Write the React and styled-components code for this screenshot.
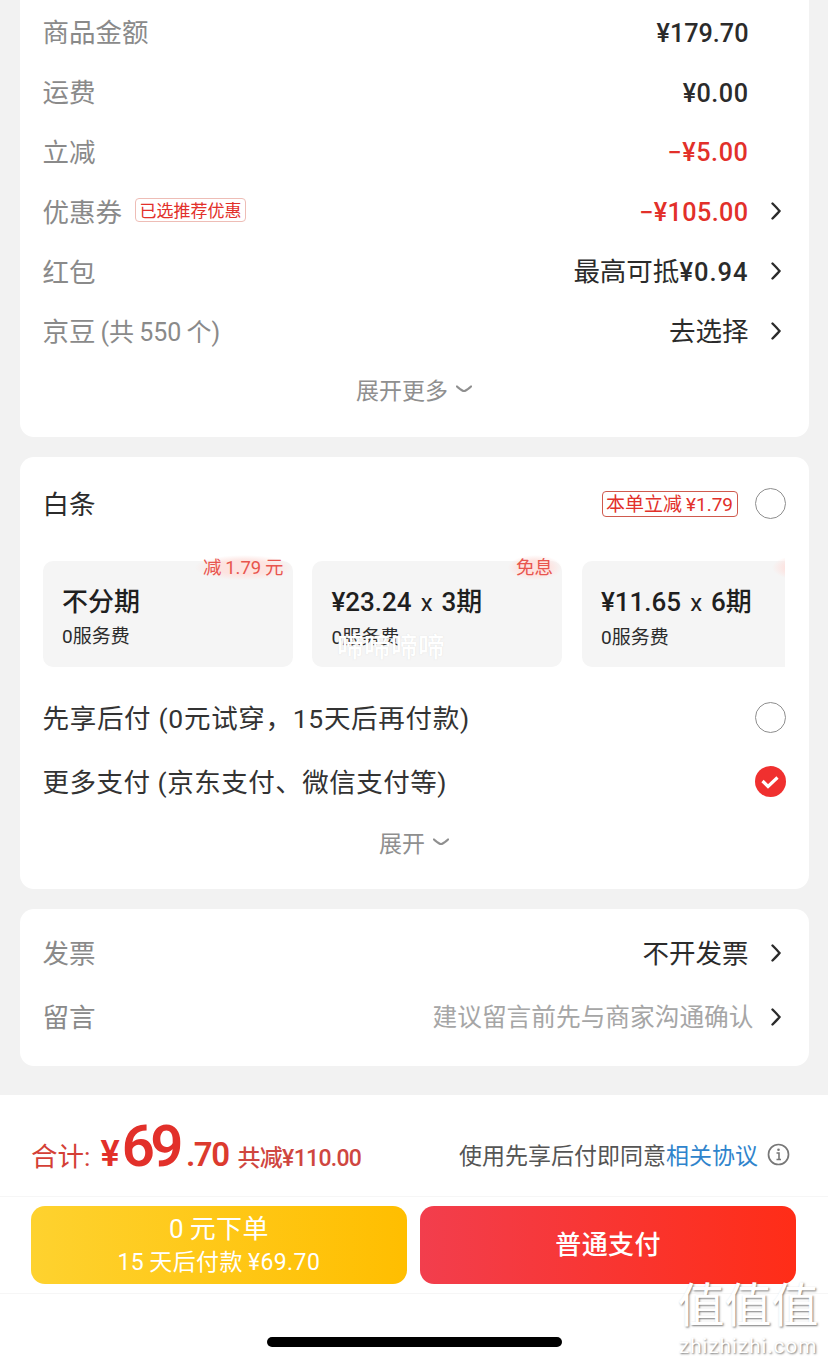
import styled, { createGlobalStyle } from 'styled-components';

const GlobalStyle = createGlobalStyle`
  html, body {
    margin: 0;
    padding: 0;
    background: #f2f2f2;
  }
  * {
    box-sizing: border-box;
  }
`;

const FONT = `Roboto, "Noto Sans CJK SC", sans-serif`;

const Page = styled.div`
  position: relative;
  width: 828px;
  height: 1362px;
  overflow: hidden;
  background: #f2f2f2;
  font-family: ${FONT};
`;

const Card = styled.section`
  margin: 0 19.5px 20px;
  padding: ${(p) => p.$padding || '0 23px'};
  background: #fff;
  border-radius: ${(p) => (p.$first ? '0 0 14px 14px' : '14px')};
`;

const Row = styled.div`
  display: flex;
  align-items: center;
  justify-content: space-between;
  height: ${(p) => p.$height || 59.8}px;
`;

const Label = styled.div`
  display: flex;
  align-items: center;
  padding-bottom: 2px;
  font-size: 26.5px;
  letter-spacing: ${(p) => p.$spacing || 0}px;
  white-space: pre;
  color: ${(p) => p.$color || '#8a8a8a'};
`;

const LabelNote = styled.span`
  margin-left: 5px;
  font-size: 25px;
`;

const RowRight = styled.div`
  display: flex;
  align-items: center;
  padding-right: ${(p) => (p.$noArrow ? '37px' : '0')};
`;

const Amount = styled.span`
  padding-top: 3px;
  font-size: 25.2px;
  font-weight: 500;
  letter-spacing: ${(p) => p.$spacing || 0}px;
  color: ${(p) => (p.$red ? '#e2302a' : '#2b2b2b')};
`;

const Value = styled.span`
  padding-bottom: 3px;
  font-size: 26.5px;
  color: #2b2b2b;
`;

const ValueDigits = styled.span`
  font-size: 25.5px;
  font-weight: 500;
  letter-spacing: 1px;
`;

const Hint = styled.span`
  margin-right: -5px;
  padding-bottom: 3px;
  font-size: 24.7px;
  color: #a6a6a6;
`;

const ArrowBox = styled.span`
  display: flex;
  justify-content: flex-end;
  width: 37px;
  padding-right: 5px;
`;

const Tag = styled.span`
  display: inline-flex;
  align-items: center;
  height: ${(p) => p.$height || 24}px;
  margin-left: ${(p) => p.$left || 0}px;
  padding: 0 3.5px 2px;
  border: 1px solid ${(p) => p.$border || '#eebdb6'};
  border-radius: 4px;
  font-size: ${(p) => p.$size || 17}px;
  letter-spacing: 0;
  color: #e2302a;
  white-space: nowrap;
`;

const Expand = styled.div`
  display: flex;
  align-items: center;
  justify-content: center;
  gap: 8px;
  height: 60px;
  padding-bottom: 3px;
  font-size: 23px;
  color: #8f8f8f;
`;

const Radio = styled.span`
  display: flex;
  align-items: center;
  justify-content: center;
  width: 31px;
  height: 31px;
  border-radius: 50%;
  border: ${(p) => (p.$checked ? 'none' : '1px solid #8e8e8e')};
  background: ${(p) => (p.$checked ? '#f0302f' : '#fff')};
  flex-shrink: 0;
`;

const HeadRight = styled.div`
  display: flex;
  align-items: center;
  gap: 17px;
`;

const PlanScroller = styled.div`
  display: flex;
  gap: 19.5px;
  width: 742px;
  overflow: hidden;
  padding-top: 10px;
  margin-bottom: 19px;
`;

const Plan = styled.div`
  position: relative;
  flex: 0 0 250px;
  height: 106px;
  padding: 24px 19.5px 0;
  background: #f5f5f5;
  border-radius: 10px;
`;

const PlanBadge = styled.span`
  position: absolute;
  top: -6px;
  right: 0;
  width: ${(p) => (p.$width ? `${p.$width}px` : 'auto')};
  height: 28px;
  padding: 0 9px 0 8px;
  font-size: 18.5px;
  line-height: 26px;
  color: #e8554e;
  white-space: pre;
  background: radial-gradient(ellipse closest-side at 50% 45%, #fde3e0 55%, rgba(253, 232, 229, 0) 100%);
`;

const PlanTitle = styled.div`
  font-size: 26px;
  line-height: 34px;
  font-weight: 500;
  color: #1f1f1f;
  white-space: nowrap;
`;

const Times = styled.span`
  font-weight: 400;
  font-size: 24px;
  margin: 0 9px;
`;

const PlanSub = styled.div`
  margin-top: 5px;
  font-size: 19px;
  line-height: 26px;
  color: #2b2b2b;
  white-space: nowrap;
`;

const Footer = styled.footer`
  margin-top: 29px;
  height: 267px;
  background: #fff;
`;

const Summary = styled.div`
  display: flex;
  align-items: baseline;
  justify-content: space-between;
  height: 102px;
  padding: 22px 38px 0 31px;
  border-bottom: 1px solid #f6f6f6;
`;

const Total = styled.div`
  display: flex;
  align-items: baseline;
  color: #e2302a;
  white-space: nowrap;
`;

const TotalLabel = styled.span`
  font-size: 26.5px;
  margin-right: 10px;
  color: #d43f36;
`;

const Yen = styled.span`
  font-size: 36px;
  font-weight: 600;
  margin-right: 2px;
`;

const Big = styled.span`
  font-size: 58px;
  font-weight: 600;
  line-height: 1;
  letter-spacing: -4.5px;
`;

const Cents = styled.span`
  font-size: 33px;
  font-weight: 600;
  letter-spacing: -1.5px;
  margin: 0 9px 0 7px;
  color: #dc3a2e;
`;

const Saved = styled.span`
  font-size: 23px;
  letter-spacing: -0.7px;
  color: #cf4640;
  font-weight: 500;
`;

const Agree = styled.div`
  display: flex;
  align-items: center;
  align-self: center;
  gap: 9px;
  margin-top: -4px;
  font-size: 23px;
  color: #555;
  white-space: nowrap;
`;

const Link = styled.span`
  color: #2f84cc;
`;

const Buttons = styled.div`
  display: flex;
  gap: 13.5px;
  height: 97px;
  padding: 9px 32px 0 31px;
  border-bottom: 1px solid #f6f6f6;
`;

const PayButton = styled.button`
  flex: 1;
  height: 78px;
  padding: 0;
  border: none;
  border-radius: 14px;
  font-family: ${FONT};
  color: #fff;
  background: ${(p) =>
    p.$yellow
      ? 'linear-gradient(90deg, #fed22f, #ffbe00)'
      : 'linear-gradient(90deg, #f23e4d, #ff2d17)'};
`;

const ButtonMain = styled.div`
  font-size: 26px;
  line-height: 36px;
  font-weight: ${(p) => p.$weight || 400};
  letter-spacing: ${(p) => p.$spacing || 0}px;
  white-space: pre;
`;

const ButtonSub = styled.div`
  font-size: 23px;
  line-height: 32px;
  letter-spacing: 0.4px;
  white-space: pre;
`;

const HomeBar = styled.div`
  width: 295px;
  height: 10px;
  margin: 43px auto 0;
  background: #000;
  border-radius: 5px;
`;

const InnerMark = styled.div`
  position: absolute;
  left: 337px;
  top: 630px;
  font-size: 27px;
  line-height: 36px;
  font-weight: 500;
  color: #fff;
  text-shadow: 0 0 1px rgba(200, 200, 200, 0.6);
`;

const SiteMark = styled.div`
  position: absolute;
  left: 675px;
  top: 1278px;
  width: 146px;
  text-align: center;
  color: #fff;
  text-shadow: 1px 1px 2px rgba(100, 100, 100, 0.85);
`;

const SiteGlyphs = styled.div`
  font-size: 47px;
  line-height: 56px;
`;

const SiteUrl = styled.div`
  font-size: 21px;
  line-height: 24px;
  letter-spacing: 0.8px;
`;

function ArrowRight() {
  return (
    <svg width="10" height="18" viewBox="0 0 10 18">
      <path d="M1.5 1.5 C4 4 7 7 8.5 9 C7 11 4 14 1.5 16.5" fill="none" stroke="#2b2b2b" strokeWidth="2.4" strokeLinecap="round" />
    </svg>
  );
}

function ArrowDown() {
  return (
    <svg width="16" height="8" viewBox="0 0 16 8">
      <path d="M1 1.5 C4 4 6 6 8 6 C10 6 12 4 15 1.5" fill="none" stroke="#8f8f8f" strokeWidth="2.2" strokeLinecap="round" />
    </svg>
  );
}

function Check() {
  return (
    <svg width="18" height="14" viewBox="0 0 18 14">
      <path d="M1.5 6 L7 11.5 L16.5 2.5" fill="none" stroke="#fff" strokeWidth="3.2" />
    </svg>
  );
}

function InfoIcon() {
  return (
    <svg width="23" height="23" viewBox="0 0 23 23">
      <circle cx="11.5" cy="11.5" r="10" fill="none" stroke="#777" strokeWidth="1.7" />
      <circle cx="11.5" cy="6.8" r="1.3" fill="#777" />
      <path d="M9.5 10 H12 V16 M9.5 16.5 H14" fill="none" stroke="#777" strokeWidth="1.6" />
    </svg>
  );
}

const plans = [
  { title: '不分期', badge: '减\u20091.79\u2009元' },
  { amount: '¥23.24', count: '3期', badge: '免息' },
  { amount: '¥11.65', count: '6期', badge: '', badgeWidth: 60 },
];

export default function App() {
  return (
    <Page>
      <GlobalStyle />

      <Card $first $padding="2px 23px 16px">
        <Row>
          <Label>商品金额</Label>
          <RowRight $noArrow><Amount>¥179.70</Amount></RowRight>
        </Row>
        <Row>
          <Label>运费</Label>
          <RowRight $noArrow><Amount $spacing={0.5}>¥0.00</Amount></RowRight>
        </Row>
        <Row>
          <Label>立减</Label>
          <RowRight $noArrow><Amount $red $spacing={0.6}>−¥5.00</Amount></RowRight>
        </Row>
        <Row>
          <Label>
            优惠券<Tag $left={13}>已选推荐优惠</Tag>
          </Label>
          <RowRight>
            <Amount $red $spacing={0.4}>−¥105.00</Amount>
            <ArrowBox><ArrowRight /></ArrowBox>
          </RowRight>
        </Row>
        <Row>
          <Label>红包</Label>
          <RowRight>
            <Value>最高可抵<ValueDigits>¥0.94</ValueDigits></Value>
            <ArrowBox><ArrowRight /></ArrowBox>
          </RowRight>
        </Row>
        <Row>
          <Label>京豆<LabelNote>(共{'\u2009'}550{'\u2009'}个)</LabelNote></Label>
          <RowRight>
            <Value>去选择</Value>
            <ArrowBox><ArrowRight /></ArrowBox>
          </RowRight>
        </Row>
        <Expand>展开更多 <ArrowDown /></Expand>
      </Card>

      <Card $padding="0 23px 15px">
        <Row $height={94}>
          <Label $color="#2b2b2b">白条</Label>
          <HeadRight>
            <Tag $height={26} $size={19} $border="#cf5a4e">本单立减{'\u2009'}¥1.79</Tag>
            <Radio />
          </HeadRight>
        </Row>
        <PlanScroller>
          {plans.map((plan, i) => (
            <Plan key={i}>
              <PlanBadge $width={plan.badgeWidth}>{plan.badge}</PlanBadge>
              <PlanTitle>
                {plan.title || (
                  <>
                    {plan.amount}
                    <Times>x</Times>
                    {plan.count}
                  </>
                )}
              </PlanTitle>
              <PlanSub>0服务费</PlanSub>
            </Plan>
          ))}
        </PlanScroller>
        <Row $height={64}>
          <Label $color="#333" $spacing={0.7}>先享后付 (0元试穿，15天后再付款)</Label>
          <Radio />
        </Row>
        <Row $height={64}>
          <Label $color="#333" $spacing={0.5}>更多支付 (京东支付、微信支付等)</Label>
          <Radio $checked><Check /></Radio>
        </Row>
        <Expand>展开 <ArrowDown /></Expand>
      </Card>

      <Card $padding="12px 23px 17px">
        <Row $height={64}>
          <Label>发票</Label>
          <RowRight>
            <Value>不开发票</Value>
            <ArrowBox><ArrowRight /></ArrowBox>
          </RowRight>
        </Row>
        <Row $height={64}>
          <Label>留言</Label>
          <RowRight>
            <Hint>建议留言前先与商家沟通确认</Hint>
            <ArrowBox><ArrowRight /></ArrowBox>
          </RowRight>
        </Row>
      </Card>

      <Footer>
        <Summary>
          <Total>
            <TotalLabel>合计:</TotalLabel>
            <Yen>¥</Yen>
            <Big>69</Big>
            <Cents>.70</Cents>
            <Saved>共减¥110.00</Saved>
          </Total>
          <Agree>
            <span>使用先享后付即同意<Link>相关协议</Link></span>
            <InfoIcon />
          </Agree>
        </Summary>
        <Buttons>
          <PayButton $yellow>
            <ButtonMain $spacing={0.4}>0{'\u2009'}元下单</ButtonMain>
            <ButtonSub>15{'\u2009'}天后付款{'\u2009'}¥69.70</ButtonSub>
          </PayButton>
          <PayButton>
            <ButtonMain $weight={500} $spacing={0.4}>普通支付</ButtonMain>
          </PayButton>
        </Buttons>
        <HomeBar />
      </Footer>

      <InnerMark>啼啼啼啼</InnerMark>
      <SiteMark>
        <SiteGlyphs>值值值</SiteGlyphs>
        <SiteUrl>zhizhizhi.com</SiteUrl>
      </SiteMark>
    </Page>
  );
}
